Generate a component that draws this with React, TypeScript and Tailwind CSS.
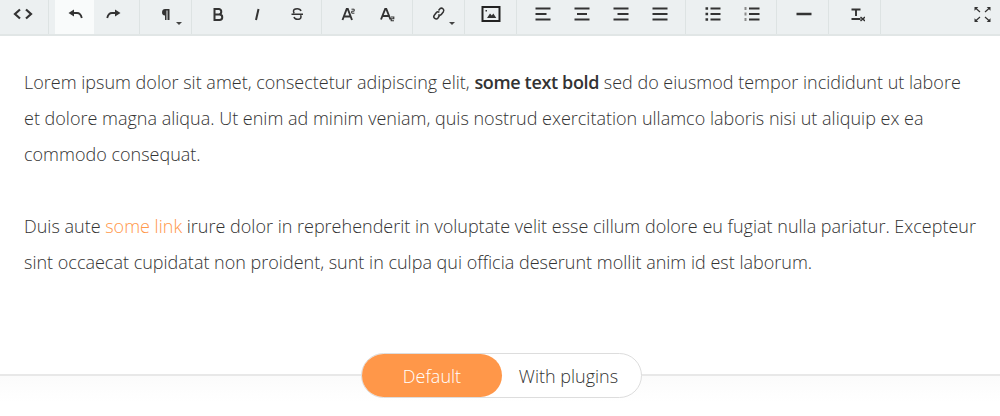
import type { ReactNode } from "react";

const ink = "#333";

function Btn({ children, active }: { children: ReactNode; active?: boolean }) {
  return (
    <button className={`flex h-[34px] w-[39px] justify-center pt-1 ${active ? "bg-[#f9fbfb]" : ""}`}>{children}</button>
  );
}

function Group({ children, first }: { children: ReactNode; first?: boolean }) {
  return (
    <div className={`flex h-[34px] border-r border-[#dde3e3] pr-1.5 ${first ? "pl-[3px]" : "pl-1.5"}`}>{children}</div>
  );
}

function Icon({ children }: { children: ReactNode }) {
  return (
    <svg width="20" height="20" viewBox="0 0 20 20" fill="none" stroke={ink} strokeWidth="1.6">
      {children}
    </svg>
  );
}

function Caret() {
  return (
    <span className="absolute top-[22px] left-[30px] h-0 w-0 border-x-[3px] border-t-[3px] border-x-transparent border-t-[#444]" />
  );
}

function AlignIcon({ rows }: { rows: [number, number][] }) {
  return (
    <Icon>
      {rows.map(([x1, x2], i) => (
        <path key={i} d={`M${x1} ${4.5 + i * 5.5}H${x2}`} strokeWidth="2" />
      ))}
    </Icon>
  );
}

function Toolbar() {
  return (
    <div className="flex h-9 border-b-2 border-[#e1e6e6] bg-[#ecf0f1]">
      <Group first>
        <Btn>
          <Icon>
            <path d="M7 5.500 2 10l5 4.500M13 5.500l5 4.500-5 4.500" strokeWidth="2.200" />
          </Icon>
        </Btn>
      </Group>
      <Group>
        <Btn active>
          <Icon>
            <path d="M3.500 9 9 5.500v7z" fill={ink} stroke="none" />
            <path d="M8 9h4c2.500 0 4 1.500 4.800 5" strokeWidth="1.800" />
          </Icon>
        </Btn>
        <Btn>
          <Icon>
            <path d="M16.500 9 11 5.500v7z" fill={ink} stroke="none" />
            <path d="M12 9H8c-2.500 0-4 1.500-4.800 5" strokeWidth="1.800" />
          </Icon>
        </Btn>
      </Group>
      <Group>
        <div className="relative">
          <Btn>
            <Icon>
              <path d="M13.500 5H9.500a3.200 3.200 0 0 0-.5 6.400V16h1.500V6.500h1V16h2z" fill={ink} stroke="none" />
            </Icon>
          </Btn>
          <Caret />
        </div>
      </Group>
      <Group>
        <Btn>
          <Icon>
            <path d="M6.500 5H11a2.800 2.800 0 0 1 0 5.500H6.500zM6.500 10.500h5a2.700 2.700 0 0 1 0 5.500h-5zM6.500 4v13" strokeWidth="2" />
          </Icon>
        </Btn>
        <Btn>
          <Icon>
            <path d="M11.500 5 9 16" strokeWidth="2" />
          </Icon>
        </Btn>
        <Btn>
          <Icon>
            <path d="M15 7c-.5-1.500-2-2.200-3.800-2.200C9 4.800 7.500 5.800 7.500 7.300c0 .8.300 1.300.8 1.800M8 13c.5 1.500 1.700 2.300 3.300 2.300 2 0 3.700-1 3.700-2.600 0-.6-.2-1.100-.5-1.500M5.500 10.300h11.500" strokeWidth="1.500" />
          </Icon>
        </Btn>
      </Group>
      <Group>
        <Btn>
          <Icon>
            <path d="M4.500 16 8.700 5h1.100L14 16M6 12.500h6.500" strokeWidth="1.900" />
            <path d="M13.500 5.200h2.700v2h-2.500v2h2.700" strokeWidth="1" />
          </Icon>
        </Btn>
        <Btn>
          <Icon>
            <path d="M4 15.500 8.200 5h1.100L13.500 15.500M5.500 12h6.500" strokeWidth="1.900" />
            <path d="M14 13h2.800v1.800h-2.600v2h2.800" strokeWidth="1.100" />
          </Icon>
        </Btn>
      </Group>
      <Group>
        <div className="relative">
          <Btn>
            <Icon>
              <path d="M9.500 6.500 11 4.700a2.300 2.300 0 0 1 3.400 3l-1.900 2.500a2.300 2.300 0 0 1-3.200.4" strokeWidth="1.500" />
              <path d="M10.500 11.500 9 14a2.300 2.300 0 0 1-3.700-2.800l1.900-2.500a2.300 2.300 0 0 1 3.200-.4" strokeWidth="1.500" />
            </Icon>
          </Btn>
          <Caret />
        </div>
      </Group>
      <Group>
        <Btn>
          <Icon>
            <rect x="1.500" y="3" width="17" height="14" strokeWidth="2" stroke="#222" />
            <path d="M6 14l3-4.500 1.800 2 1.500-2 3 4.500z" fill={ink} stroke="none" />
            <path d="M4.500 6h1.500v1.500H4.500z" fill={ink} stroke="none" />
          </Icon>
        </Btn>
      </Group>
      <Group>
        <Btn>
          <AlignIcon rows={[[2.5, 17.5], [2.5, 13.5], [2.5, 17.5]]} />
        </Btn>
        <Btn>
          <AlignIcon rows={[[2.5, 17.5], [5, 15], [2.5, 17.5]]} />
        </Btn>
        <Btn>
          <AlignIcon rows={[[2.5, 17.5], [6.5, 17.5], [2.5, 17.5]]} />
        </Btn>
        <Btn>
          <AlignIcon rows={[[2.5, 17.5], [2.5, 17.5], [2.5, 17.5]]} />
        </Btn>
      </Group>
      <Group>
        <Btn>
          <Icon>
            <path d="M8.500 4.500h10M8.500 10h10M8.500 15.500h10" strokeWidth="2" />
            <path d="M3.500 3.200h2.600v2.600h-2.600zM3.500 8.700h2.600v2.600h-2.600zM3.500 14.200h2.600v2.600h-2.600z" fill={ink} stroke="none" />
          </Icon>
        </Btn>
        <Btn>
          <Icon>
            <path d="M8 4.500h10.500M8 10h10.500M8 15.500h10.500" strokeWidth="2" />
            <path d="M3.500 3h2v3h-2zM3.500 8.500h2v3h-2zM3.500 14h2v3h-2z" fill="#8a8a8a" stroke="none" />
          </Icon>
        </Btn>
      </Group>
      <Group>
        <Btn>
          <Icon>
            <path d="M3.500 10h15" strokeWidth="2.500" />
          </Icon>
        </Btn>
      </Group>
      <Group>
        <Btn>
          <Icon>
            <path d="M6.500 5.500h9M11 5.500V12M6.500 15h9" strokeWidth="1.900" />
            <path d="M15.500 13l4.500 4M20 13l-4.500 4" strokeWidth="1.500" />
          </Icon>
        </Btn>
      </Group>
      <div className="ml-auto">
        <Btn>
          <Icon>
            <path d="M3.500 3h3.800L3.500 6.800zM19.500 3h-3.800l3.800 3.800zM3.500 18h3.800l-3.800-3.800zM19.500 18h-3.800l3.800-3.800z" fill={ink} stroke="none" />
            <path d="M4.500 4l4.500 4M18.500 4 14 8M4.500 17 9 13M18.500 17 14 13" strokeWidth="1.200" />
          </Icon>
        </Btn>
      </div>
    </div>
  );
}

export default function App() {
  return (
    <div className="h-[416px] w-[1000px] overflow-hidden bg-white font-['Open_Sans',sans-serif]">
      <Toolbar />
      <div className="space-y-9 px-6 pt-7 text-lg leading-9 font-light text-[#333]">
        <p>
          Lorem ipsum dolor sit amet, consectetur adipiscing elit,{" "}
          <strong className="font-semibold tracking-[-0.35px]">some text bold</strong> sed do eiusmod tempor incididunt
          ut labore et dolore magna aliqua. Ut enim ad minim veniam, quis nostrud exercitation ullamco laboris nisi ut
          aliquip ex ea commodo consequat.
        </p>
        <p>
          Duis aute <a className="text-[#ff9749]">some link</a> irure dolor in reprehenderit in voluptate velit esse
          cillum dolore eu fugiat nulla pariatur. Excepteur sint occaecat cupidatat non proident, sunt in culpa qui
          officia deserunt mollit anim id est laborum.
        </p>
      </div>
      <div className="relative mt-[73px] flex justify-center pl-[3px]">
        <div className="absolute inset-x-0 top-[21px] h-7 border-t-2 border-[#e8e8e8] bg-gradient-to-b from-[#fbfbfb] to-white" />
        <div className="relative flex h-[45px] w-[281px] items-center rounded-full border border-[#dddddd] bg-white text-lg font-light">
          <div className="flex h-[43px] w-[140px] items-center justify-center rounded-full bg-[#ff9749] text-white">
            Default
          </div>
          <div className="flex-1 pr-[6px] text-center text-[#333]">With plugins</div>
        </div>
      </div>
    </div>
  );
}
